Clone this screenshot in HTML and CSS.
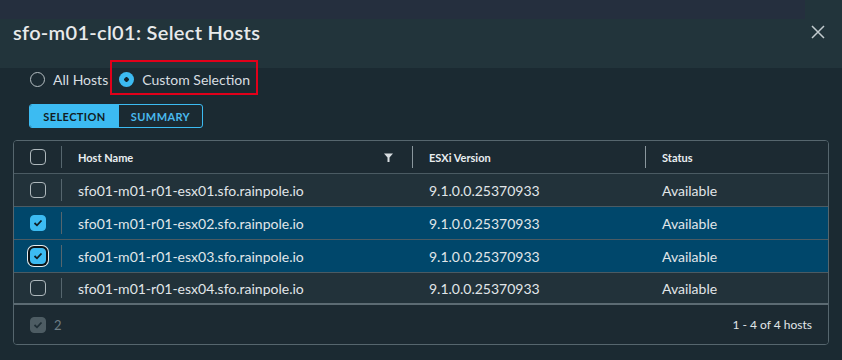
FILE: index.html
```html
<!DOCTYPE html>
<html>
<head>
<meta charset="utf-8">
<link rel="stylesheet" href="styles.css">
</head>
<body>
<div class="modal">
  <header class="modal-header">
    <h1 class="title">sfo-m01-cl01: Select Hosts</h1>
    <button class="close" aria-label="Close">
      <svg width="14" height="14" viewBox="0 0 14 14"><path d="M1 1L13 13M13 1L1 13" stroke="#c3cbcf" stroke-width="1.5" fill="none"/></svg>
    </button>
  </header>
  <div class="modal-body">
    <div class="radios">
      <label class="radio"><span class="radio-dot"></span>All Hosts</label>
      <label class="radio checked"><span class="radio-dot"></span>Custom Selection</label>
      <span class="highlight"></span>
    </div>
    <div class="segmented">
      <span class="seg active">SELECTION</span>
      <span class="seg">SUMMARY</span>
    </div>
    <div class="grid">
      <div class="row head">
        <div class="cell sel"><span class="cb"></span></div>
        <div class="cell name">Host Name
          <svg class="filter" width="9" height="9" viewBox="0 0 9 9"><path d="M0 0.5H9L5.5 4.5V9H3.5V4.5Z" fill="#d7dde0"/></svg>
        </div>
        <div class="cell ver">ESXi Version</div>
        <div class="cell status">Status</div>
      </div>
      <div class="row">
        <div class="cell sel"><span class="cb"></span></div>
        <div class="cell name">sfo01-m01-r01-esx01.sfo.rainpole.io</div>
        <div class="cell ver">9.1.0.0.25370933</div>
        <div class="cell status">Available</div>
      </div>
      <div class="row selected">
        <div class="cell sel"><span class="cb on"><svg width="10" height="8" viewBox="0 0 10 8"><path d="M1.5 4L4 6.3L8.5 1.5" stroke="#0f1e25" stroke-width="1.8" fill="none"/></svg></span></div>
        <div class="cell name">sfo01-m01-r01-esx02.sfo.rainpole.io</div>
        <div class="cell ver">9.1.0.0.25370933</div>
        <div class="cell status">Available</div>
      </div>
      <div class="row selected">
        <div class="cell sel"><span class="cb on focus"><svg width="10" height="8" viewBox="0 0 10 8"><path d="M1.5 4L4 6.3L8.5 1.5" stroke="#0f1e25" stroke-width="1.8" fill="none"/></svg></span></div>
        <div class="cell name">sfo01-m01-r01-esx03.sfo.rainpole.io</div>
        <div class="cell ver">9.1.0.0.25370933</div>
        <div class="cell status">Available</div>
      </div>
      <div class="row last">
        <div class="cell sel"><span class="cb"></span></div>
        <div class="cell name">sfo01-m01-r01-esx04.sfo.rainpole.io</div>
        <div class="cell ver">9.1.0.0.25370933</div>
        <div class="cell status">Available</div>
      </div>
      <div class="footer">
        <div class="count"><span class="cb dis"><svg width="10" height="8" viewBox="0 0 10 8"><path d="M1.5 4L4 6.3L8.5 1.5" stroke="#1f2e36" stroke-width="1.8" fill="none"/></svg></span><span class="num">2</span></div>
        <div class="pager">1 - 4 of 4 hosts</div>
      </div>
    </div>
  </div>
</div>
</body>
</html>
```
FILE: styles.css
```css
* { box-sizing: border-box; }
html, body { margin: 0; padding: 0; }
body {
  background: #1b2a32;
  font-family: Lato, "Open Sans", sans-serif;
  color: #e4e9eb;
  width: 842px;
  height: 360px;
  overflow: hidden;
}
.modal-header {
  height: 68px;
  background: linear-gradient(#252f3e, #252f3e) 0 0 / 805px 19px no-repeat, #22343b;
  display: flex;
  align-items: center;
  justify-content: space-between;
  padding: 0 17px 4px 13px;
}
.title {
  margin: 0;
  font-size: 20px;
  font-weight: 600;
  letter-spacing: 0.3px;
  color: #e8eaeb;
}
.close {
  background: none;
  border: 0;
  padding: 0;
  width: 14px;
  height: 14px;
  display: flex;
}
.modal-body { padding: 0 13px; }
.radios {
  position: relative;
  height: 22px;
  display: flex;
  align-items: center;
  gap: 11px;
  padding-left: 17px;
  font-size: 14px;
  color: #d8dee1;
}
.radio { display: flex; align-items: center; gap: 8px; }
.radio-dot {
  width: 15px; height: 15px;
  border-radius: 50%;
  border: 1px solid #b5bec2;
}
.radio.checked .radio-dot {
  border: 0;
  background: radial-gradient(circle, #13242c 0 2px, #3cbbf2 2.5px);
}
.highlight {
  position: absolute;
  left: 97px;
  top: -8px;
  width: 148px;
  height: 35px;
  border: 2px solid #e2001a;
}
.segmented {
  display: inline-flex;
  margin: 14px 0 12px 16px;
  border: 1px solid #3cbbf2;
  border-radius: 3px;
  height: 24px;
  overflow: hidden;
}
.seg {
  display: flex;
  align-items: center;
  justify-content: center;
  font-size: 11px;
  font-weight: 700;
  letter-spacing: 0.4px;
  color: #49b9ee;
  width: 83px;
}
.seg.active {
  background: #3cbbf2;
  color: #111c22;
  width: 89px;
}
.grid {
  border: 1px solid #56666e;
  border-radius: 4px;
  overflow: hidden;
}
.row {
  display: grid;
  grid-template-columns: 48px 351px 233px 1fr;
  height: 33px;
  border-top: 1px solid #4b5b63;
  background: #22323a;
  font-size: 14px;
  color: #e1e6e9;
}
.row.head {
  height: 32px;
  border-top: 0;
  background: #1c2a32;
  font-size: 11px;
  font-weight: 700;
  color: #e9eef0;
}
.row.selected { background: #00476b; }
.row.last { border-bottom: 2px solid #5c6b73; }
.cell {
  display: flex;
  align-items: center;
  padding-left: 16px;
  position: relative;
}
.cell.sel { padding-left: 16px; }
.cell.sel::after {
  content: "";
  position: absolute;
  right: 0;
  top: 5px;
  bottom: 5px;
  width: 1px;
  background: #56666e;
}
.row.head .cell.name::after,
.row.head .cell.ver::after {
  content: "";
  position: absolute;
  right: 0;
  top: 5px;
  bottom: 5px;
  width: 1px;
  background: #8a979d;
}
.filter { position: absolute; right: 20px; top: 12px; }
.cb {
  width: 16px; height: 16px;
  border: 1px solid #aeb8bc;
  border-radius: 4px;
  display: flex;
  align-items: center;
  justify-content: center;
}
.cb.on { background: #3cbbf2; border-color: #3cbbf2; }
.cb.focus { box-shadow: 0 0 0 2px #0b1418, 0 0 0 3px #e6ecee; }
.cb.dis { background: #4d5c63; border-color: #4d5c63; }
.footer {
  height: 39px;
  display: flex;
  align-items: center;
  justify-content: space-between;
  padding: 0 16px 0 16px;
  background: #1c2a32;
}
.count { display: flex; align-items: center; gap: 8px; color: #6f7e85; font-size: 13px; }
.pager { font-size: 12px; color: #e1e6e9; }
```
